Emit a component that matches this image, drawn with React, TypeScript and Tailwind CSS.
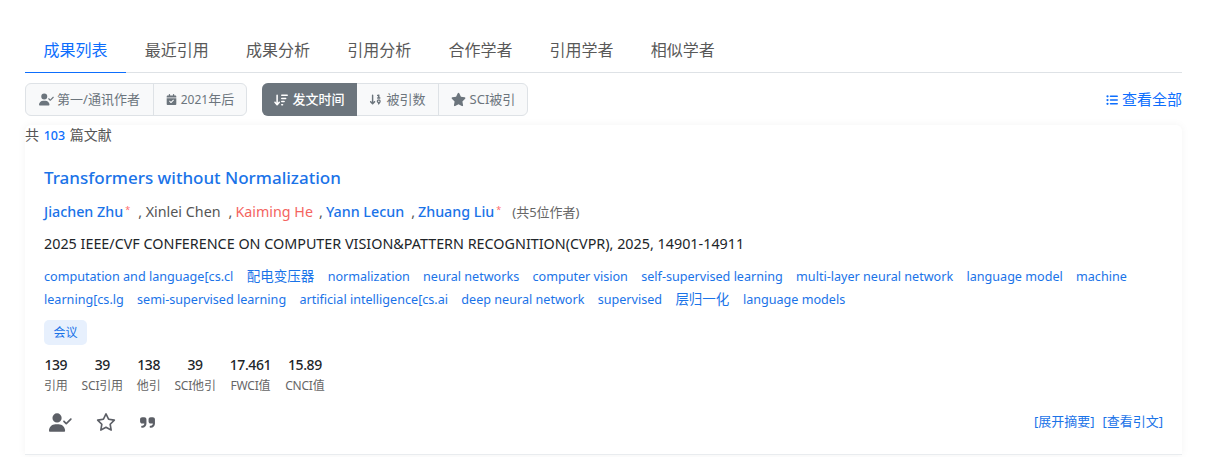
import { FaUserCheck, FaCalendarCheck, FaStar, FaRegStar, FaQuoteRight, FaListUl, FaArrowDownWideShort, FaArrowDown19 } from "react-icons/fa6";

const font = { fontFamily: '"Noto Sans", "Noto Sans CJK SC", sans-serif' };

const tabs = ["成果列表", "最近引用", "成果分析", "引用分析", "合作学者", "引用学者", "相似学者"];
const keywords = ["computation and language[cs.cl", "配电变压器", "normalization", "neural networks", "computer vision", "self-supervised learning", "multi-layer neural network", "language model", "machine", "learning[cs.lg", "semi-supervised learning", "artificial intelligence[cs.ai", "deep neural network", "supervised", "层归一化", "language models"];
const stats = [["139", "引用"], ["39", "SCI引用"], ["138", "他引"], ["39", "SCI他引"], ["17.461", "FWCI值"], ["15.89", "CNCI值"]];

export default function App() {
  return (
    <div className="w-[1210px] h-[457px] overflow-hidden bg-white pl-[25px] pr-[28px] pt-[27px]" style={font}>
      <div className="flex h-[46px] border-b border-[#dee2e6]">
        {tabs.map((t, i) => (
          <div key={t} className={`px-[18.6px] text-[16px] leading-[46px] h-[46px] ${i === 0 ? "text-[#0d6efd] border-b border-[#0d6efd]" : "text-[#595959]"}`}>{t}</div>
        ))}
      </div>
      <div className="flex items-center mt-[10px] h-[33px]">
        <div className="flex h-[33px] w-[222px] rounded-[6px] border border-[#dee2e6] bg-[#f8f9fa] text-[13px] text-[#6c757d]">
          <div className="w-[128px] flex items-center justify-center gap-[3px] border-r border-[#dee2e6]"><FaUserCheck className="text-[15px]" />第一/通讯作者</div>
          <div className="flex-1 flex items-center justify-center gap-[4px]"><FaCalendarCheck className="text-[11px]" /><span><span className="text-[12px]">2021</span>年后</span></div>
        </div>
        <div className="flex h-[33px] w-[266px] ml-[15px] rounded-[6px] border border-[#dee2e6] bg-[#f8f9fa] text-[13px] text-[#6c757d]">
          <div className="w-[95px] -ml-px -my-px rounded-l-[6px] flex items-center justify-center gap-[4px] bg-[#6c757d] text-white font-medium"><FaArrowDownWideShort className="text-[14px]" />发文时间</div>
          <div className="w-[82px] flex items-center justify-center gap-[4px] border-r border-[#dee2e6]"><FaArrowDown19 className="text-[13px]" />被引数</div>
          <div className="flex-1 flex items-center justify-center gap-[4px]"><FaStar className="text-[15px]" />SCI被引</div>
        </div>
        <div className="ml-auto flex items-center gap-[4px] text-[15px] text-[#0d6efd]"><FaListUl className="text-[12px]" />查看全部</div>
      </div>
      <div className="mt-[10px] text-[14px] leading-[18px] text-[#555] h-[18px]">共 <span className="mx-[1px] text-[12.5px] text-[#0d6efd] font-medium">103</span> 篇文献</div>
      <div className="-mt-[19px] h-[330px] rounded-t-[6px] border-b border-[#e9ecef] shadow-[0_0_8px_rgba(0,0,0,0.05)] px-[19px] pt-[41px]">
        <div className="text-[17px] leading-[24px] font-medium text-[#1a73e8]">Transformers without Normalization</div>
        <div className="mt-[10px] flex items-baseline text-[14.3px] leading-[24px] text-[#555]">
          <span className="text-[#1a73e8] font-medium">Jiachen Zhu</span><sup className="text-[#ff6b6b] ml-[2px] text-[9px]">*</sup>
          <span className="ml-[8px]">, Xinlei Chen</span>
          <span className="ml-[8px]">,</span><span className="ml-[3px] text-[#f4645f]">Kaiming He</span>
          <span className="ml-[6px]">,</span><span className="ml-[3px] text-[#1a73e8] font-medium">Yann Lecun</span>
          <span className="ml-[7px]">,</span><span className="ml-[3px] text-[#1a73e8] font-medium">Zhuang Liu</span><sup className="text-[#ff6b6b] ml-[2px] text-[9px]">*</sup>
          <span className="ml-[11px] text-[13px] text-[#666]">(共5位作者)</span>
        </div>
        <div className="mt-[8px] text-[14.35px] leading-[24px] text-[#212529]">2025 IEEE/CVF CONFERENCE ON COMPUTER VISION&amp;PATTERN RECOGNITION(CVPR), 2025, 14901-14911</div>
        <div className="mt-[9px] text-[12.6px] leading-[23px] text-[#1a73e8] w-[1100px]">
          {keywords.map((k) => (
            <span key={k} className={`mr-[10px] ${/[a-z]/.test(k) ? "" : "text-[13.5px]"}`}>{k}{" "}</span>
          ))}
        </div>
        <div className="mt-[9px] w-[43px] h-[25px] rounded-[5px] bg-[#e7f0fd] text-[#1a73e8] text-[12px] leading-[25px] text-center">会议</div>
        <div className="mt-[9px] flex gap-[14px]">
          {stats.map(([v, l]) => (
            <div key={l} className="flex flex-col items-center">
              <div className="text-[14px] leading-[22px] font-medium tracking-[-0.4px] text-[#212529]">{v}</div>
              <div className="text-[12px] leading-[20px] tracking-[-0.2px] text-[#666]">{l}</div>
            </div>
          ))}
        </div>
        <div className="mt-[14px] flex items-center h-[24px] text-[#5c5f66]">
          <FaUserCheck className="ml-[5px] text-[23px]" />
          <FaRegStar className="ml-[24px] text-[20px]" />
          <FaQuoteRight className="ml-[23px] text-[17px]" />
          <div className="ml-auto text-[13px] text-[#1a73e8] flex gap-[8px]"><span>[展开摘要]</span><span>[查看引文]</span></div>
        </div>
      </div>
    </div>
  );
}
